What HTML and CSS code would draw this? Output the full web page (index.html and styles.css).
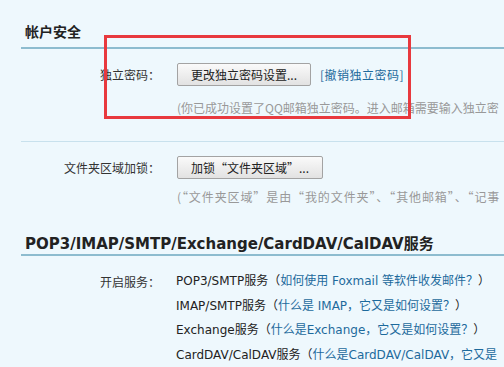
FILE: index.html
```html
<!DOCTYPE html>
<html lang="zh-CN">
<head>
    <meta charset="UTF-8">
    <title>帐户安全</title>
    <link rel="stylesheet" href="styles.css">
</head>
<body>
<div class="section">
    <h3 class="title">帐户安全</h3>
    <div class="row first">
        <span class="label">独立密码：</span>
        <button class="btn">更改独立密码设置...</button>
        <a class="link" href="#">[撤销独立密码]</a>
    </div>
    <p class="hint first-hint">(你已成功设置了QQ邮箱独立密码。进入邮箱需要输入独立密</p>
    <div class="sep"></div>
    <div class="row second">
        <span class="label">文件夹区域加锁：</span>
        <button class="btn">加锁“文件夹区域”...</button>
    </div>
    <p class="hint second-hint">(“文件夹区域”是由“我的文件夹”、“其他邮箱”、“记事</p>
    <div class="highlight"></div>
</div>
<div class="section">
    <h3 class="title wide">POP3/IMAP/SMTP/Exchange/CardDAV/CalDAV服务</h3>
    <div class="services">
        <span class="label">开启服务：</span>
        <ul class="list">
            <li>POP3/SMTP服务（<a href="#">如何使用 Foxmail 等软件收发邮件？</a>）</li>
            <li>IMAP/SMTP服务（<a href="#">什么是 IMAP，它又是如何设置？</a>）</li>
            <li>Exchange服务（<a href="#">什么是Exchange，它又是如何设置？</a>）</li>
            <li>CardDAV/CalDAV服务（<a href="#">什么是CardDAV/CalDAV，它又是</a></li>
        </ul>
    </div>
</div>
</body>
</html>
```

FILE: styles.css
```css
* {
    box-sizing: border-box;
}
html, body {
    overflow: hidden;
}
body {
    background: #eef8fd;
    color: #222;
    font-family: "DejaVu Sans", "Noto Sans CJK SC", sans-serif;
    font-size: 12px;
    margin: 0;
    padding: 0;
    white-space: nowrap;
}
.section {
    position: relative;
}
.title {
    border-bottom: 2px solid #8dbccf;
    box-sizing: content-box;
    font-family: "Noto Sans CJK SC", sans-serif;
    font-size: 14px;
    font-weight: bold;
    height: 26px;
    line-height: 20px;
    margin: 0 0 0 21px;
    padding: 21px 0 0 4px;
}
.title.wide {
    font-family: "DejaVu Sans", "Noto Sans CJK SC", sans-serif;
    font-size: 15px;
    height: 20px;
    padding-top: 27px;
}
.row {
    align-items: center;
    display: flex;
    height: 23px;
    margin-top: 14px;
}
.label {
    color: #333;
    flex-shrink: 0;
    font-family: "Noto Sans CJK SC", sans-serif;
    padding-right: 16px;
    text-align: right;
    width: 176px;
}
.btn {
    background: linear-gradient(#fafafa, #e2e2e2);
    border: 1px solid #a3a3a3;
    border-radius: 2px;
    color: #222;
    font-family: "Noto Sans CJK SC", sans-serif;
    font-size: 12px;
    height: 23px;
    margin-left: 1px;
    padding: 0 12px;
    width: 134px;
}
.row.second .btn {
    width: 146px;
}
.link {
    color: #1d6a9c;
    font-family: "Noto Sans CJK SC", sans-serif;
    letter-spacing: 0.5px;
    margin-left: 9px;
    text-decoration: none;
}
.hint {
    color: #999;
    font-family: "Noto Sans CJK SC", sans-serif;
    line-height: 20px;
    margin: 0 0 0 177px;
}
.first-hint {
    margin-top: 12px;
}
.second-hint {
    letter-spacing: 0.9px;
    margin-top: 8px;
}
.sep {
    border-top: 1px solid #c8e1ed;
    margin: 23px 0 14px 21px;
}
.highlight {
    border: 3px solid #e8393e;
    height: 84px;
    left: 104px;
    position: absolute;
    top: 35px;
    width: 307px;
}
.services {
    display: flex;
    margin-top: 13px;
}
.services .label {
    line-height: 25px;
}
.list {
    list-style: none;
    margin: 0;
    padding: 0;
}
.list li {
    line-height: 24.7px;
}
.list a {
    color: #1d6a9c;
    text-decoration: none;
}
```
